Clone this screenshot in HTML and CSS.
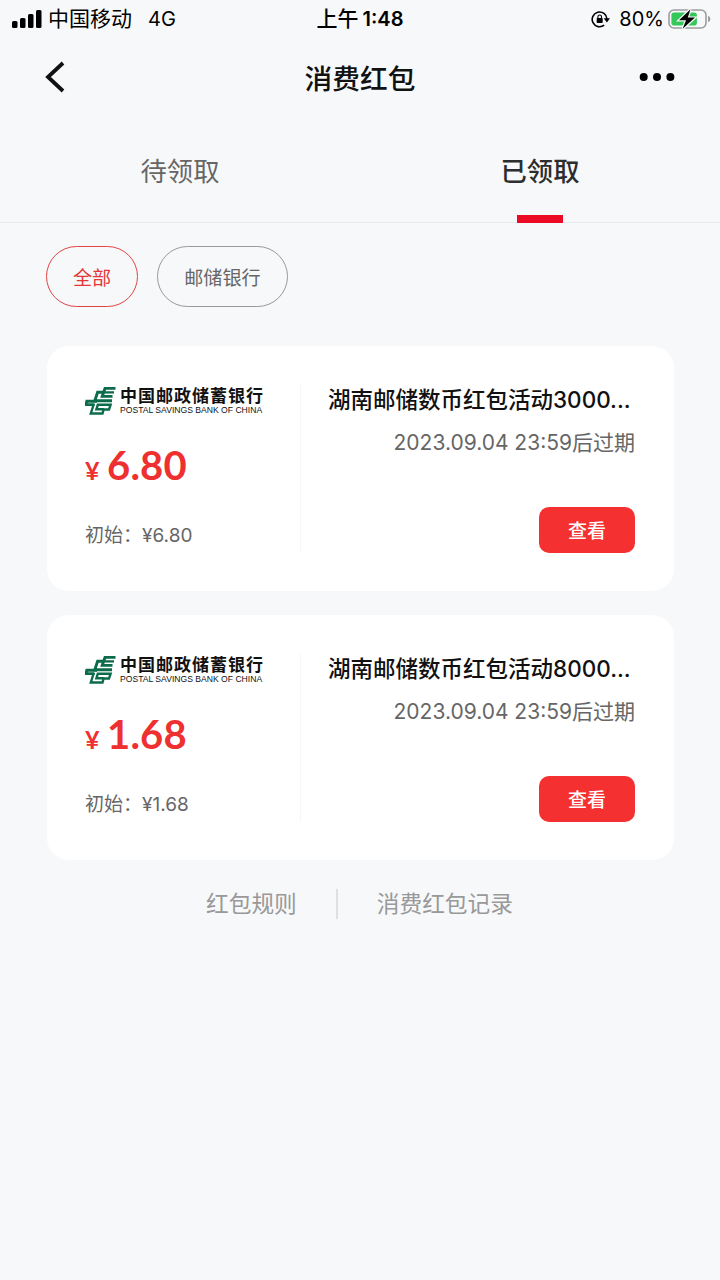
FILE: index.html
```html
<!DOCTYPE html>
<html lang="zh-CN">
<head>
  <meta charset="UTF-8" />
  <title>消费红包</title>
  <link rel="stylesheet" href="styles.css">
</head>
<body>
  <svg class="defs">
    <symbol id="psbc" viewBox="0 0 31 30">
      <g fill="none" stroke="#0b6b4b" stroke-width="2.9">
        <path d="M30.5 2.4H20L17.2 10.4H27.5"/>
        <path d="M29 6.4H19.5" stroke-width="2.3"/>
        <path d="M18 6.2H12.6L9.8 14.8H27"/>
        <path d="M12 15.3H1.8L.9 18.6H9.5"/>
        <path d="M8.8 18L5.8 27.5H17.5L18.6 23.5H24L25.6 18.8H12.8L11.4 23.3H18.8" stroke-width="2.4"/>
      </g>
    </symbol>
  </svg>

  <div class="status-bar">
    <div class="status-left">
      <svg width="31" height="20" viewBox="0 0 31 20">
        <rect x="0" y="12" width="5.5" height="7" rx="1.5"/>
        <rect x="8" y="9" width="5.5" height="10" rx="1.5"/>
        <rect x="16" y="5" width="5.5" height="14" rx="1.5"/>
        <rect x="24" y="1" width="5.5" height="18" rx="1.5"/>
      </svg>
      <span class="carrier">中国移动</span>
      <span class="network">4G</span>
    </div>
    <div class="time"><span class="period">上午</span><span>1:48</span></div>
    <div class="status-right">
      <svg width="20" height="18" viewBox="0 0 20 18">
        <path d="M13.2 15.2A7.4 7.4 0 1 1 16 9" fill="none" stroke="#000" stroke-width="1.6"/>
        <path d="M12.7 8.3H19L15.9 12.4Z"/>
        <rect x="5.7" y="8" width="6" height="5" rx=".7"/>
        <path d="M6.9 8.2V6.8a1.8 1.8 0 0 1 3.6 0v1.4" fill="none" stroke="#000" stroke-width="1.1"/>
      </svg>
      <span class="percent">80%</span>
      <svg width="43" height="22" viewBox="0 0 43 22">
        <rect x="1" y="2" width="37" height="18" rx="5" fill="none" stroke="#9c9da0" stroke-width="1.6"/>
        <rect x="3.4" y="4.4" width="25.5" height="13.2" rx="2.8" fill="#35c759"/>
        <path d="M40 7.8q2.4.8 2.4 3.2t-2.4 3.2z" fill="#9c9da0"/>
        <path d="M22.5 1.2L11 12.2H18L14.7 20.8L27 9.6H19.8Z" stroke="#f7f8fa" stroke-width="2.4" paint-order="stroke"/>
      </svg>
    </div>
  </div>

  <div class="nav">
    <svg class="back" width="20" height="32" viewBox="0 0 20 32">
      <path d="M18 2L3 16L18 30" fill="none" stroke="#111" stroke-width="3.8"/>
    </svg>
    <h1>消费红包</h1>
    <svg class="more" width="36" height="8" viewBox="0 0 36 8">
      <circle cx="4.7" cy="4" r="4"/>
      <circle cx="18" cy="4" r="4"/>
      <circle cx="31.4" cy="4" r="4"/>
    </svg>
  </div>

  <div class="tabs">
    <div class="tab">待领取</div>
    <div class="tab active">已领取</div>
  </div>

  <div class="filters">
    <button class="chip selected">全部</button>
    <button class="chip">邮储银行</button>
  </div>

  <div class="list">
    <div class="card">
      <div class="amount">
        <div class="bank">
          <svg class="logo"><use href="#psbc"/></svg>
          <div class="bank-name">
            <div class="name-cn">中国邮政储蓄银行</div>
            <div class="name-en">POSTAL SAVINGS BANK OF CHINA</div>
          </div>
        </div>
        <div class="price"><span class="yen">¥</span>6.80</div>
        <div class="initial">初始：¥6.80</div>
      </div>
      <div class="info">
        <div class="title">湖南邮储数币红包活动3000...</div>
        <div class="expire">2023.09.04 23:59后过期</div>
        <button class="view">查看</button>
      </div>
    </div>
    <div class="card">
      <div class="amount">
        <div class="bank">
          <svg class="logo"><use href="#psbc"/></svg>
          <div class="bank-name">
            <div class="name-cn">中国邮政储蓄银行</div>
            <div class="name-en">POSTAL SAVINGS BANK OF CHINA</div>
          </div>
        </div>
        <div class="price"><span class="yen">¥</span>1.68</div>
        <div class="initial">初始：¥1.68</div>
      </div>
      <div class="info">
        <div class="title">湖南邮储数币红包活动8000...</div>
        <div class="expire">2023.09.04 23:59后过期</div>
        <button class="view">查看</button>
      </div>
    </div>
  </div>

  <div class="links">
    <span>红包规则</span>
    <span class="line"></span>
    <span>消费红包记录</span>
  </div>
</body>
</html>
```

FILE: styles.css
```css
* {
  box-sizing: border-box;
}

body {
  margin: 0;
  min-height: 100vh;
  background: #f7f8fa;
  color: #111;
  font-family: Inter, "Noto Sans CJK SC", sans-serif;
}

button {
  font-family: inherit;
  padding: 0;
}

.defs {
  display: block;
  width: 0;
  height: 0;
}

.status-bar {
  display: grid;
  grid-template-columns: 1fr auto 1fr;
  align-items: center;
  height: 38px;
  padding: 0 9px 1px 12px;
  font-size: 20px;
  line-height: 24px;
  color: #000;
}

.status-left,
.status-right {
  display: flex;
  align-items: center;
}

.status-right {
  justify-content: flex-end;
}

.carrier {
  margin-left: 5px;
  font-size: 21px;
}

.network {
  margin-left: 16px;
}

.time {
  display: flex;
  gap: 4px;
  margin-right: 3px;
  font-weight: 600;
}

.period {
  font-size: 21px;
  font-weight: 500;
}

.percent {
  margin: 0 4px 0 8px;
}

.nav {
  display: grid;
  grid-template-columns: 1fr auto 1fr;
  align-items: center;
  height: 78px;
  padding: 0 45px;
}

.nav h1 {
  margin: 0;
  font-size: 27.7px;
  font-weight: 500;
}

.more {
  justify-self: end;
}

.tabs {
  display: flex;
  height: 107px;
  border-bottom: 1px solid #ebecee;
}

.tab {
  flex: 1;
  display: flex;
  justify-content: center;
  padding-top: 37px;
  font-size: 26.3px;
  line-height: 38px;
  color: #666;
}

.tab.active {
  flex-direction: column;
  align-items: center;
  justify-content: space-between;
  color: #2c2d2f;
  font-weight: 500;
}

.tab.active::after {
  content: "";
  width: 46px;
  height: 8px;
  margin-bottom: -1px;
  background: #ec0b25;
}

.filters {
  display: flex;
  gap: 19px;
  padding: 23px 46px 39px;
}

.chip {
  height: 61px;
  padding: 0 26px;
  border: 1px solid #999;
  border-radius: 31px;
  background: none;
  font-size: 19.1px;
  color: #666;
}

.chip.selected {
  border-color: #e14444;
  color: #e53535;
}

.list {
  display: flex;
  flex-direction: column;
  gap: 24px;
  padding: 0 46px 0 47px;
}

.card {
  display: flex;
  height: 245px;
  padding: 38px 39px 38px 0;
  border-radius: 22px;
  background: #fff;
}

.amount {
  width: 254px;
  padding-left: 38px;
  border-right: 1px solid #f7f7f8;
}

.bank {
  display: flex;
  height: 30px;
  margin-top: 2px;
}

.logo {
  width: 31px;
  height: 30px;
}

.bank-name {
  margin-left: 4px;
  white-space: nowrap;
  color: #111;
}

.name-cn {
  font-size: 17px;
  font-weight: 700;
  line-height: 20px;
  letter-spacing: 1px;
}

.name-en {
  font-family: "Liberation Sans", sans-serif;
  font-size: 8.6px;
  line-height: 9px;
}

.price {
  margin-top: 25px;
  font-family: Lato, sans-serif;
  font-size: 40px;
  font-weight: 700;
  line-height: 48px;
  letter-spacing: 0.2px;
  color: #ee3030;
}

.yen {
  display: inline-block;
  width: 22px;
  font-size: 25px;
}

.initial {
  margin-top: 28px;
  font-size: 19px;
  line-height: 28px;
  color: #666;
}

.info {
  flex: 1;
  display: flex;
  flex-direction: column;
  align-items: flex-end;
}

.title {
  width: 307px;
  font-size: 22.5px;
  font-weight: 500;
  line-height: 32px;
  white-space: nowrap;
}

.expire {
  margin-top: 12px;
  font-size: 21px;
  line-height: 30px;
  color: #666;
  white-space: nowrap;
}

.view {
  width: 96px;
  height: 46px;
  margin-top: auto;
  padding-bottom: 2px;
  border: 0;
  border-radius: 10px;
  background: #f43030;
  color: #fff;
  font-size: 19px;
  font-weight: 500;
}

.links {
  display: flex;
  align-items: center;
  justify-content: center;
  padding: 28px 1px 0 0;
  font-size: 22.7px;
  line-height: 32px;
  color: #999;
}

.line {
  width: 2px;
  height: 30px;
  margin: 0 39px;
  background: #dfe0e2;
}
```
